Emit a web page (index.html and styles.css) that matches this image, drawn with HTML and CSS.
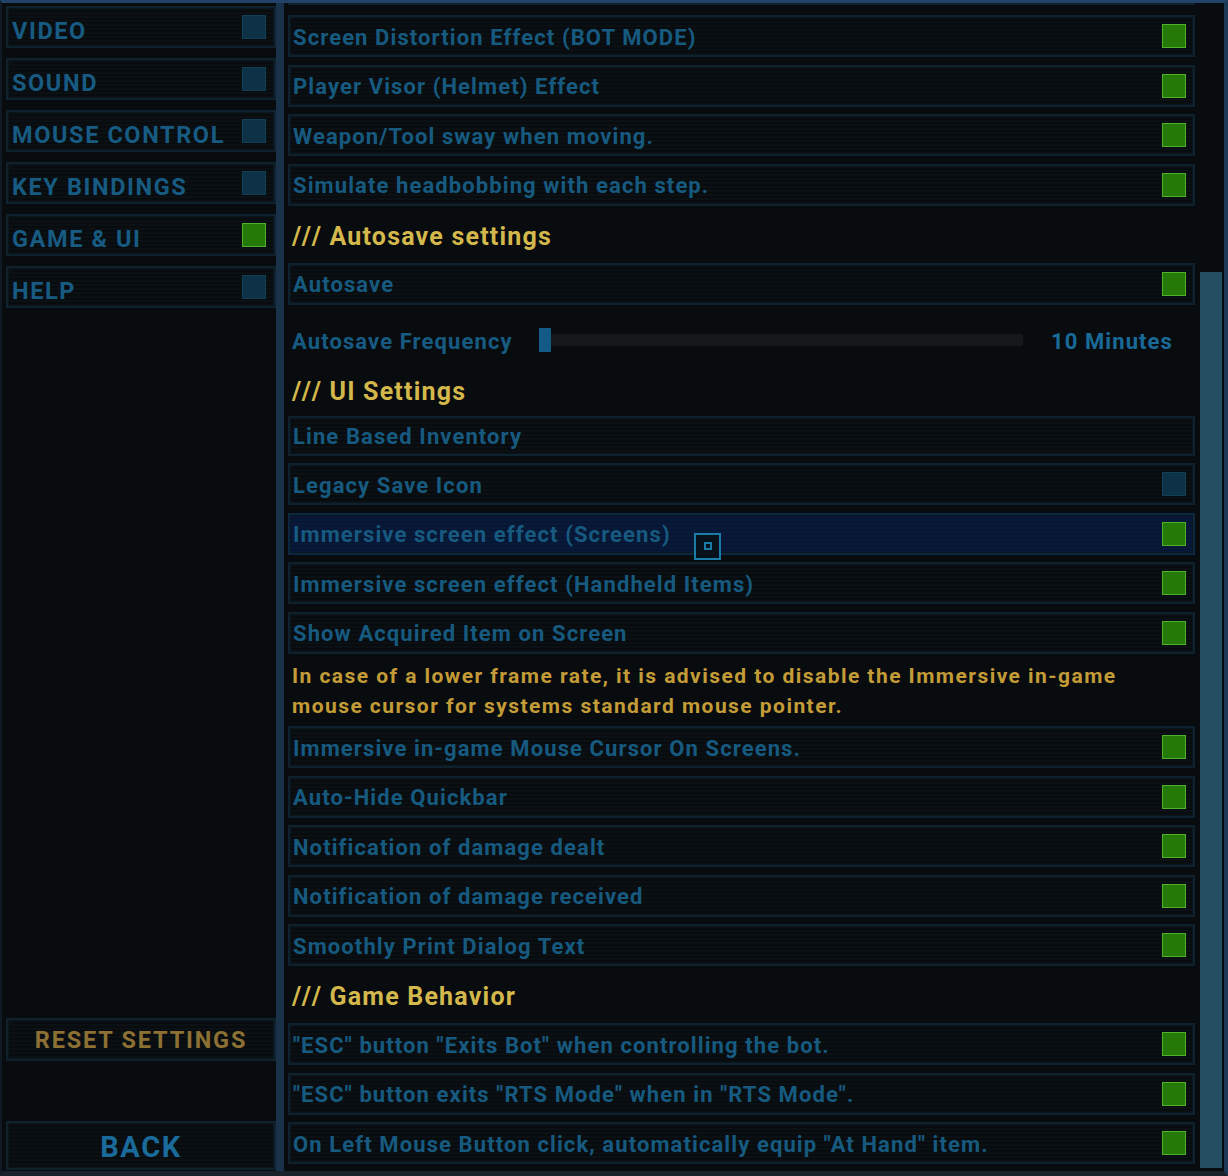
FILE: index.html
```html
<!DOCTYPE html>
<html>
<head>
<meta charset="utf-8">
<link rel="stylesheet" href="styles.css">
</head>
<body>
<div class="screen">
  <aside class="nav">
    <div class="nav-list">
      <div class="nav-item"><span>VIDEO</span><i class="box"></i></div>
      <div class="nav-item"><span>SOUND</span><i class="box"></i></div>
      <div class="nav-item"><span>MOUSE CONTROL</span><i class="box"></i></div>
      <div class="nav-item"><span>KEY BINDINGS</span><i class="box"></i></div>
      <div class="nav-item"><span>GAME &amp; UI</span><i class="box on"></i></div>
      <div class="nav-item"><span>HELP</span><i class="box"></i></div>
    </div>
    <div class="nav-bottom">
      <div class="btn reset">RESET SETTINGS</div>
      <div class="btn back">BACK</div>
    </div>
  </aside>
  <div class="divider"></div>
  <main class="panel">
    <div class="list">
      <div class="cut"></div>
      <div class="row"><span>Screen Distortion Effect (BOT MODE)</span><i class="box on"></i></div>
      <div class="row"><span>Player Visor (Helmet) Effect</span><i class="box on"></i></div>
      <div class="row"><span>Weapon/Tool sway when moving.</span><i class="box on"></i></div>
      <div class="row"><span>Simulate headbobbing with each step.</span><i class="box on"></i></div>
      <div class="head"><span class="sl">///</span>Autosave settings</div>
      <div class="row"><span>Autosave</span><i class="box on"></i></div>
      <div class="slider-row">
        <span class="slider-label">Autosave Frequency</span>
        <div class="slider"><i class="thumb"></i><i class="track"></i></div>
        <span class="slider-value">10 Minutes</span>
      </div>
      <div class="head head-ui"><span class="sl">///</span>UI Settings</div>
      <div class="row short"><span>Line Based Inventory</span></div>
      <div class="row"><span>Legacy Save Icon</span><i class="box"></i></div>
      <div class="row sel"><span>Immersive screen effect (Screens)</span><i class="box on"></i><div class="cursor"><i></i></div></div>
      <div class="row"><span>Immersive screen effect (Handheld Items)</span><i class="box on"></i></div>
      <div class="row"><span>Show Acquired Item on Screen</span><i class="box on"></i></div>
      <p class="warn">In case of a lower frame rate, it is advised to disable the Immersive in-game mouse cursor for systems standard mouse pointer.</p>
      <div class="row"><span>Immersive in-game Mouse Cursor On Screens.</span><i class="box on"></i></div>
      <div class="row"><span>Auto-Hide Quickbar</span><i class="box on"></i></div>
      <div class="row"><span>Notification of damage dealt</span><i class="box on"></i></div>
      <div class="row"><span>Notification of damage received</span><i class="box on"></i></div>
      <div class="row"><span>Smoothly Print Dialog Text</span><i class="box on"></i></div>
      <div class="head head-game"><span class="sl">///</span>Game Behavior</div>
      <div class="row"><span>"ESC" button "Exits Bot" when controlling the bot.</span><i class="box on"></i></div>
      <div class="row"><span>"ESC" button exits "RTS Mode" when in "RTS Mode".</span><i class="box on"></i></div>
      <div class="row"><span>On Left Mouse Button click, automatically equip "At Hand" item.</span><i class="box on"></i></div>
    </div>
    <div class="scroll"><div class="scroll-thumb"></div></div>
  </main>
</div>
</body>
</html>
```
FILE: styles.css
```css
* { box-sizing: border-box; }
html, body { margin: 0; padding: 0; background: #090d10; }
body { font-family: Roboto, "Liberation Sans", sans-serif; font-weight: 700; }

.screen {
  display: flex;
  width: 1228px;
  height: 1176px;
  background: #080c0f;
  border-top: 3px solid #21436a;
  border-right: 4px solid #1c3956;
  border-bottom: 5px solid #1a232b;
  border-left: 2px solid #0f1a24;
  overflow: hidden;
}

/* ---------- left nav ---------- */
.nav {
  width: 274px;
  flex: none;
  display: flex;
  flex-direction: column;
  justify-content: space-between;
  padding: 3px 0 0 4px;
  background: #080c0f;
}
.nav-list { display: flex; flex-direction: column; gap: 10px; }
.nav-item, .btn, .row {
  border: 2px solid #0f212c;
  box-shadow: inset 0 0 0 1px #0a161d;
  background: repeating-linear-gradient(to bottom, #0a1013 0 2px, #080c0f 2px 4px);
}
.nav-item {
  height: 42px;
  width: 270px;
  display: flex;
  align-items: center;
  justify-content: space-between;
  padding: 0 8px 0 4px;
  color: #175b82;
  font-size: 23.5px;
  letter-spacing: 1.6px;
}
.nav-item span { padding-top: 7px; }
.box {
  display: block;
  width: 24px;
  height: 24px;
  flex: none;
  background: #0d3145;
  border: 1px solid #123f58;
}
.box.on {
  background: #257a07;
  border: 1px solid #4fb02c;
}
.nav-bottom {
  display: flex;
  flex-direction: column;
  gap: 60px;
  padding-bottom: 1px;
}
.btn {
  width: 270px;
  display: flex;
  align-items: center;
  justify-content: center;
}
.reset { height: 43px; color: #8c7034; font-size: 23.5px; letter-spacing: 1.8px; padding-top: 1px; }
.back { height: 49px; color: #1a6b9b; font-size: 29px; letter-spacing: 1.6px; padding-top: 3px; }

.divider {
  width: 8px;
  flex: none;
  background: #1a3249;
}

/* ---------- right panel ---------- */
.panel {
  flex: 1;
  display: flex;
  padding-left: 4px;
}
.list {
  width: 907px;
  flex: none;
  display: flex;
  flex-direction: column;
  gap: 7.5px;
}
.cut {
  height: 2px;
  border-bottom: 2px solid #0f212c;
  margin-bottom: 2.5px;
}
.row {
  position: relative;
  height: 42px;
  flex: none;
  display: flex;
  align-items: center;
  justify-content: space-between;
  padding: 0 7px 0 3px;
  color: #175a80;
  font-size: 22px;
  letter-spacing: 1.1px;
}
.row span { padding-top: 2px; }
.row.short { height: 40px; }
.row.sel {
  background: repeating-linear-gradient(to bottom, #08193a 0 2px, #071632 2px 4px);
  border-color: #0c2742;
}
.head {
  height: 42px;
  flex: none;
  display: flex;
  align-items: center;
  padding: 5px 0 0 4px;
  color: #d4b84b;
  font-size: 25px;
  letter-spacing: 1.2px;
}
.head .sl { letter-spacing: 3.5px; margin-right: 5px; }
.head-ui { margin-bottom: -3.5px; padding-top: 1px; }
.head-game { padding-top: 3px; }
.slider-row {
  height: 50px;
  flex: none;
  display: flex;
  align-items: center;
  padding: 6px 22px 0 4px;
  color: #175b82;
  font-size: 22px;
  letter-spacing: 1.1px;
}
.slider-label { width: 247px; flex: none; padding-top: 2px; }
.slider {
  width: 484px;
  flex: none;
  display: flex;
  align-items: center;
}
.thumb { display: block; width: 12px; height: 24px; background: #135a86; }
.track { display: block; flex: 1; height: 12px; background: #14181a; }
.slider-value { margin-left: auto; color: #1a6a98; padding-top: 2px; }
.warn {
  margin: 0 0 -2.5px 0;
  padding: 0 60px 0 4px;
  color: #c49c37;
  font-size: 21px;
  letter-spacing: 1.45px;
  line-height: 30px;
}
.cursor {
  position: absolute;
  left: 404px;
  top: 18px;
  width: 27px;
  height: 27px;
  border: 2px solid #1a7ca6;
  background: #06111c;
  display: flex;
  align-items: center;
  justify-content: center;
}
.cursor i {
  display: block;
  width: 8px;
  height: 8px;
  border: 2px solid #1a7ca6;
}

.scroll {
  width: 22px;
  flex: none;
  margin-left: 5px;
  display: flex;
  flex-direction: column;
}
.scroll-thumb {
  margin-top: 269px;
  margin-bottom: 3px;
  flex: 1;
  background: #244e62;
}
```
